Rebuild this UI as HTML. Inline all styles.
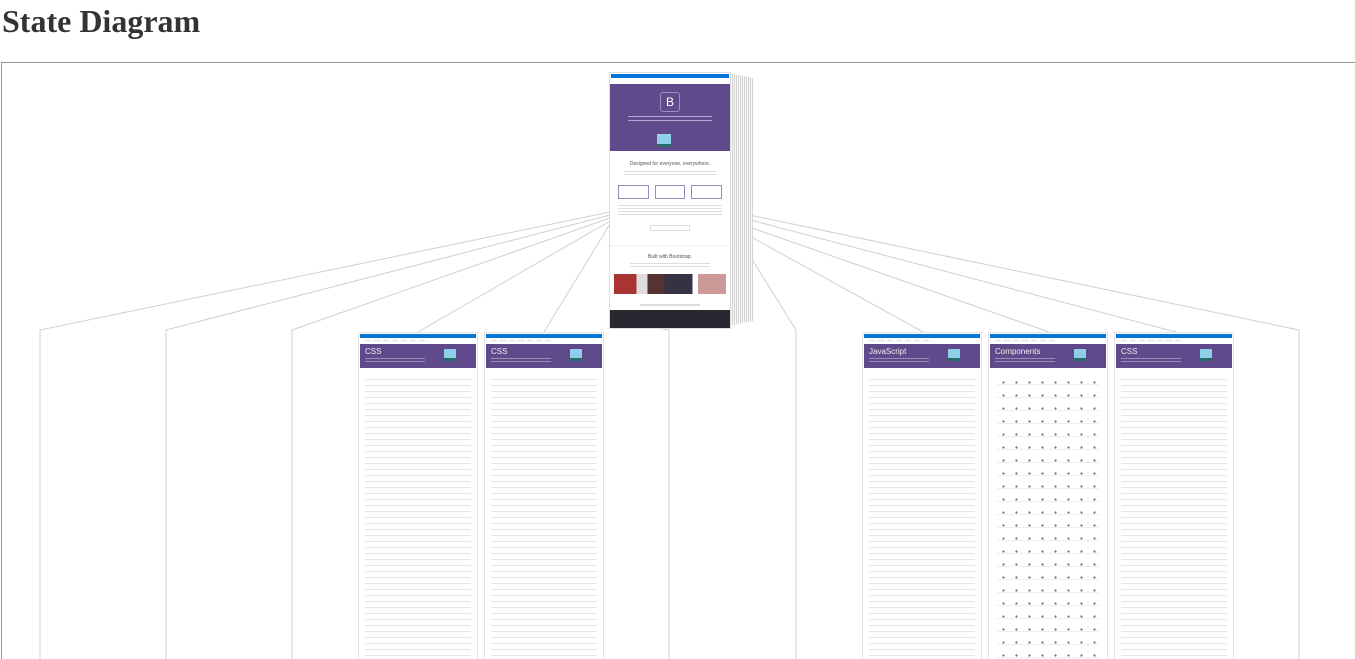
<!DOCTYPE html>
<html><head><meta charset="utf-8"><style>
html,body{margin:0;background:#fff;width:1355px;height:659px;overflow:hidden}
body{position:relative;font-family:"Liberation Sans",sans-serif}
h1{position:absolute;left:2px;top:3px;margin:0;font:bold 32px "Liberation Serif",serif;color:#333}
.box{position:absolute;left:1px;top:62px;width:1360px;height:610px;border:1px solid #999;box-sizing:border-box}
svg{position:absolute;left:0;top:0}
.th{position:absolute;top:332px;width:118px;height:330px;border:1px solid #e2e2e2;background:#fff;overflow:hidden}
.th .bl{height:4px;background:#0275d8;margin:1px 1px 0}
.th .nv{height:6px;background:repeating-linear-gradient(90deg,#ddd 0 6px,#fff 6px 9px) 6px 2px/60px 1px no-repeat}
.th .hero{height:24px;background:#5f4b8b;margin:0 1px;position:relative;color:#eee;font-size:7px;padding:3px 0 0 5px;box-sizing:border-box}
.th .hero b{font-weight:normal;font-size:8px;display:block}
.th .hero i{position:absolute;right:20px;top:5px;width:12px;height:9px;background:#8fd0e8;border-bottom:3px solid #2a6a6a}
.th .hero u{position:absolute;left:5px;top:14px;width:60px;height:5px;background:repeating-linear-gradient(#9a8cb8 0 1px,transparent 1px 3px)}
.th .ct{margin:8px 6px 0;height:300px;background:repeating-linear-gradient(#fff 0 3px,#e6e6e6 3px 4px,#fff 4px 6px);}
.th .gl{margin:8px 8px 0;height:300px;background:radial-gradient(circle,#777 0.8px,transparent 1.4px) 0 0/13px 13px,repeating-linear-gradient(#fff 0 8px,#eee 8px 9px,#fff 9px 13px)}
.top{position:absolute;left:609px;top:72px;width:120px;height:255px;border:1px solid #ddd;background:#fff;overflow:hidden;z-index:2}
.stack{position:absolute;left:728px;top:73px;width:25px;height:253px;background:repeating-linear-gradient(90deg,#d4d4d4 0 1px,#f7f7f7 1px 2px);clip-path:polygon(0 0,100% 2%,100% 98%,0 100%)}
</style></head><body>
<h1>State Diagram</h1>
<div class="box"></div>
<svg width="1355" height="659" stroke="#d0d0d0" stroke-width="1" fill="none">
<path d="M610 212L40 330V659M610 215L166 330V659M610 218L292 330V659M610 221L418 332M610 224L544 332M645 326L669 330V659"/>
<path d="M735 212L1299 330V659M735 216L1176 332M735 222L1049 332M735 228L923 332M735 232L796 330V659"/>
</svg>
<div class="stack"></div>
<div class="top">
<div style="height:4px;background:#0275d8;margin:1px 1px 0"></div>
<div style="height:6px"></div>
<div style="height:67px;background:#5f4b8b;position:relative">
<div style="position:absolute;left:50px;top:8px;width:18px;height:18px;border:1px solid #9d8fc0;border-radius:3px;color:#fff;font-size:12px;text-align:center;line-height:18px">B</div>
<div style="position:absolute;left:18px;top:32px;width:84px;height:8px;background:repeating-linear-gradient(#b3a6d0 0 1px,transparent 1px 4px)"></div>
<div style="position:absolute;left:47px;top:50px;width:14px;height:10px;background:#8fd0e8;border-bottom:3px solid #2a6a6a"></div>
</div>
<div style="text-align:center;font-size:5px;color:#555;margin-top:10px">Designed for everyone, everywhere.</div>
<div style="margin:4px 14px;height:6px;background:repeating-linear-gradient(#ddd 0 1px,#fff 1px 3px)"></div>
<div style="margin:8px 8px 0;height:14px;display:flex;gap:6px"><div style="flex:1;border:1px solid #9a88c0"></div><div style="flex:1;border:1px solid #9a88c0"></div><div style="flex:1;border:1px solid #9a88c0"></div></div>
<div style="margin:6px 8px;height:12px;background:repeating-linear-gradient(#ddd 0 1px,#fff 1px 3px)"></div>
<div style="margin:8px 40px;height:4px;border:1px solid #ddd"></div>
<div style="border-top:1px solid #f0f0f0;margin-top:14px;text-align:center;font-size:5px;color:#555;padding-top:8px">Built with Bootstrap.</div>
<div style="margin:3px 20px;height:5px;background:repeating-linear-gradient(#ddd 0 1px,#fff 1px 3px)"></div>
<div style="margin:6px 4px;height:20px;background:linear-gradient(90deg,#a33 0 20%,#ddd 20% 30%,#533 30% 45%,#334 45% 70%,#fff 70% 75%,#c99 75%)"></div>
<div style="margin:10px 30px 0;height:2px;background:#ddd"></div>
<div style="margin:4px 48px;height:4px;border:1px solid #ddd"></div>
<div style="position:absolute;left:0;right:0;bottom:0;height:18px;background:#2a2730"></div>
</div>
<div class="th" style="left:358px"><div class="bl"></div><div class="nv"></div><div class="hero"><b>CSS</b><u></u><i></i></div><div class="ct"></div></div>
<div class="th" style="left:484px"><div class="bl"></div><div class="nv"></div><div class="hero"><b>CSS</b><u></u><i></i></div><div class="ct"></div></div>
<div class="th" style="left:862px"><div class="bl"></div><div class="nv"></div><div class="hero"><b>JavaScript</b><u></u><i></i></div><div class="ct"></div></div>
<div class="th" style="left:988px"><div class="bl"></div><div class="nv"></div><div class="hero"><b>Components</b><u></u><i></i></div><div class="gl"></div></div>
<div class="th" style="left:1114px"><div class="bl"></div><div class="nv"></div><div class="hero"><b>CSS</b><u></u><i></i></div><div class="ct"></div></div>
</body></html>
